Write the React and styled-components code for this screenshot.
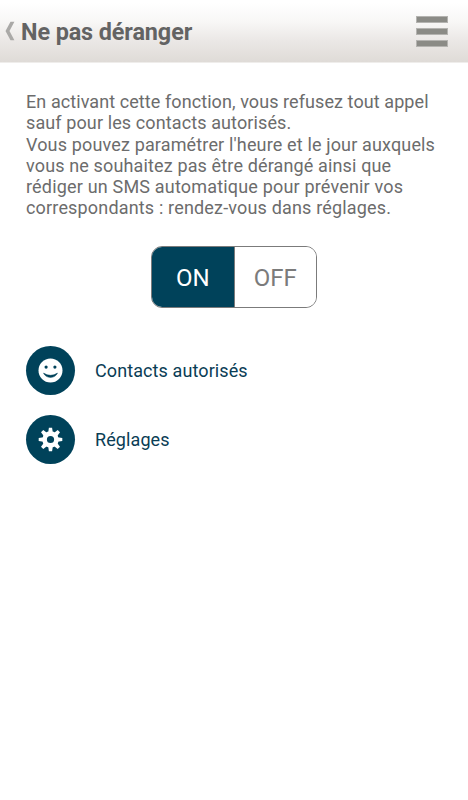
import { useState } from 'react'
import styled, { createGlobalStyle } from 'styled-components'

const NAVY = '#00425a'
const GREY = '#6c6c6c'

const GlobalStyle = createGlobalStyle`
	* {
		box-sizing: border-box;
	}

	body {
		margin: 0;
		background: #fff;
		font-family: Roboto, 'Liberation Sans', sans-serif;
	}
`

const Screen = styled.div`
	width: 100%;
	min-height: 100vh;
	overflow: hidden;
	background: #fff;
`

const Header = styled.header`
	display: flex;
	align-items: center;
	height: 63px;
	padding: 0 20px 0 5px;
	border-bottom: 1px solid #efedeb;
	background: linear-gradient(#ffffff 4%, #f8f7f6 35%, #ebe8e6 65%, #dfdbd7 100%);
`

const BackButton = styled.button`
	display: flex;
	width: 16px;
	padding: 0;
	border: 0;
	background: none;
`

const Title = styled.h1`
	flex: 1;
	margin: 2px 0 0;
	color: #636363;
	font-size: 23.4px;
	font-weight: 700;
	line-height: 28px;
	letter-spacing: -0.1px;
`

const MenuButton = styled.button`
	display: flex;
	flex-direction: column;
	gap: 5px;
	padding: 0;
	border: 0;
	background: none;
`

const MenuBar = styled.span`
	width: 32px;
	height: 7px;
	border: 1px solid #b4b3b0;
	background: #8b8b86;
`

const Content = styled.main`
	padding: 28px 26px 0;
`

const Description = styled.p`
	margin: 0;
	color: ${GREY};
	font-size: 18px;
	line-height: 21.25px;
	white-space: nowrap;
`

const Line = styled.span`
	display: block;
	letter-spacing: ${({ $spacing }) => $spacing || 0}px;
`

const Toggle = styled.div`
	display: flex;
	width: 166px;
	height: 62px;
	margin: 27px 0 0 125px;
	border: 1px solid #7b7b7b;
	border-radius: 11px;
	overflow: hidden;
`

const ToggleOption = styled.button`
	flex: 1;
	padding: 2px 0 0;
	border: 0;
	background: ${({ $active }) => ($active ? NAVY : '#fff')};
	color: ${({ $active }) => ($active ? '#fff' : '#7b7b7b')};
	font-family: inherit;
	font-size: 24px;

	& + & {
		border-left: 1px solid #7b7b7b;
	}
`

const Menu = styled.nav`
	display: flex;
	flex-direction: column;
	gap: 20px;
	margin-top: 38px;
`

const MenuItem = styled.a`
	display: flex;
	align-items: center;
	gap: 20px;
	height: 49px;
	color: #0a3d55;
	font-size: 18px;
	letter-spacing: 0.1px;
	text-decoration: none;
`

const IconCircle = styled.span`
	display: flex;
	align-items: center;
	justify-content: center;
	width: 49px;
	height: 49px;
	border-radius: 50%;
	background: ${NAVY};
`

const BackIcon = () => (
	<svg width="10" height="20" viewBox="0 0 10 20">
		<path d="M5.5 0.7H9.4L4.5 10L9.4 19.3H5.5L0.5 10Z" fill="#aaa9a7" />
	</svg>
)

const SmileIcon = () => (
	<svg width="25" height="25" viewBox="-12.5 -12.5 25 25">
		<circle r="12" fill="#fff" />
		<circle cx="-4.4" cy="-3.4" r="1.6" fill={NAVY} />
		<circle cx="4.4" cy="-3.4" r="1.6" fill={NAVY} />
		<path d="M-7 2.6Q0 7 7 2.6Q4.8 6.9 0 6.9Q-4.8 6.9 -7 2.6Z" fill={NAVY} stroke={NAVY} strokeWidth="0.5" />
	</svg>
)

const TEETH = [0, 45, 90, 135, 180, 225, 270, 315]

const GearIcon = () => (
	<svg width="25" height="25" viewBox="-12.5 -12.5 25 25">
		<g fill="#fff">
			{TEETH.map((angle) => (
				<path key={angle} d="M-2.3 -7L-1.6 -11.8H1.6L2.3 -7Z" transform={`rotate(${angle})`} />
			))}
		</g>
		<circle r="5.9" fill="none" stroke="#fff" strokeWidth="4.6" />
	</svg>
)

const LINES = [
	{ text: 'En activant cette fonction, vous refusez tout appel', spacing: 0.08 },
	{ text: 'sauf pour les contacts autorisés.', spacing: 0.11 },
	{ text: "Vous pouvez paramétrer l'heure et le jour auxquels", spacing: 0.15 },
	{ text: 'vous ne souhaitez pas être dérangé ainsi que', spacing: 0.14 },
	{ text: 'rédiger un SMS automatique pour prévenir vos', spacing: 0.18 },
	{ text: 'correspondants : rendez-vous dans réglages.', spacing: 0.17 },
]

const App = () => {
	const [enabled, setEnabled] = useState(true)

	return (
		<Screen>
			<GlobalStyle />
			<Header>
				<BackButton aria-label="Retour">
					<BackIcon />
				</BackButton>
				<Title>Ne pas déranger</Title>
				<MenuButton aria-label="Menu">
					<MenuBar />
					<MenuBar />
					<MenuBar />
				</MenuButton>
			</Header>
			<Content>
				<Description>
					{LINES.map(({ text, spacing }) => (
						<Line key={text} $spacing={spacing}>
							{text}
						</Line>
					))}
				</Description>
				<Toggle>
					<ToggleOption $active={enabled} onClick={() => setEnabled(true)}>
						ON
					</ToggleOption>
					<ToggleOption $active={!enabled} onClick={() => setEnabled(false)}>
						OFF
					</ToggleOption>
				</Toggle>
				<Menu>
					<MenuItem>
						<IconCircle>
							<SmileIcon />
						</IconCircle>
						Contacts autorisés
					</MenuItem>
					<MenuItem>
						<IconCircle>
							<GearIcon />
						</IconCircle>
						Réglages
					</MenuItem>
				</Menu>
			</Content>
		</Screen>
	)
}

export default App
